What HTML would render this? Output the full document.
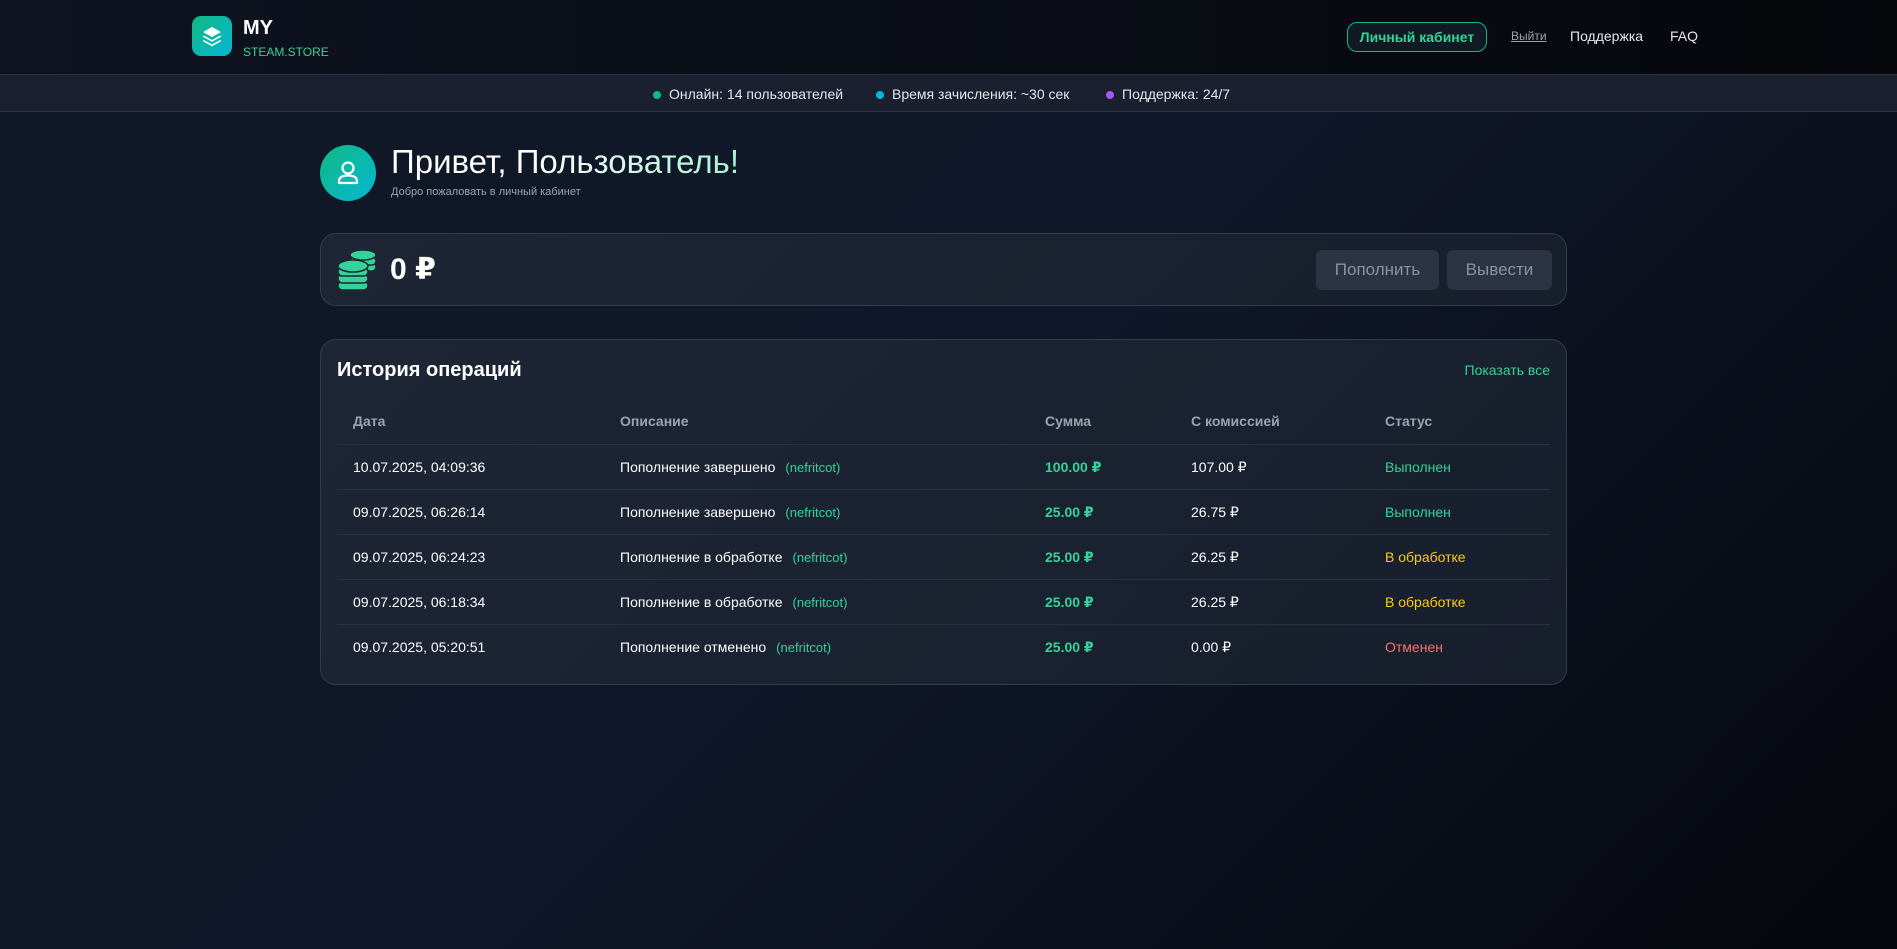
<!DOCTYPE html>
<html><head><meta charset="utf-8"><style>
*{margin:0;padding:0;box-sizing:border-box}
body{width:1897px;height:949px;overflow:hidden;font-family:"Liberation Sans","DejaVu Sans",sans-serif;color:#fff;background:linear-gradient(135deg,#111827 0%,#0f172a 50%,#05070c 100%);position:relative}
.hdr{position:absolute;left:0;top:0;width:1897px;height:75px;background:linear-gradient(90deg,#0e1320,#05070b);border-bottom:1px solid #2a3140}
.logo{position:absolute;left:192px;top:16px;width:40px;height:40px;border-radius:9px;background:linear-gradient(135deg,#10b981,#06b6d4)}
.bar{position:absolute;left:0;top:75px;width:1897px;height:37px;background:#1a2030;border-bottom:1px solid #2e3546;font-size:14px;color:#e5e7eb}
.dot{display:inline-block;width:8px;height:8px;border-radius:50%;margin-right:8px}
.card{position:absolute;left:320px;width:1247px;border:1px solid #343c4c;border-radius:16px;background:linear-gradient(135deg,#1e2636,#171e2c)}
.btn{position:absolute;top:16px;height:40px;background:#2b3344;border-radius:6px;color:#8a93a3;font-size:17px;line-height:40px;text-align:center}
table{position:absolute;left:16px;top:58px;width:1213px;border-collapse:collapse;font-size:14px;table-layout:fixed}
td,th{text-align:left;height:45px;padding:12px 0 0;border-bottom:1px solid #2a3142;vertical-align:top;line-height:20px;white-space:nowrap}
th{color:#9ca3af;font-weight:bold;height:46px;padding-top:13px}
tr:last-child td{border-bottom:none}
td:first-child,th:first-child{padding-left:16px}
.g{color:#34d399}.y{color:#facc15}.r{color:#f87171}
.n{color:#34d399;font-size:13px;margin-left:10px;line-height:20px}
</style></head><body>
<div class="hdr">
<div class="logo"><svg width="40" height="40" viewBox="0 0 40 40"><path d="M20 11l9 5-9 5-9-5z" fill="#fff"/><path d="M12 19.5l8 4.5 8-4.5 1.5 1-9.5 5.3-9.5-5.3z" fill="#fff"/><path d="M12 24l8 4.5 8-4.5 1.5 1-9.5 5.3-9.5-5.3z" fill="#fff"/></svg></div>
<div style="position:absolute;left:243px;top:17px;font-size:20px;font-weight:bold">MY</div>
<div style="position:absolute;left:243px;top:45px;font-size:12px;color:#34d399">STEAM.STORE</div>
<div style="position:absolute;left:1347px;top:22px;width:140px;height:30px;border:1px solid #10b981;border-radius:10px;background:#111a24;color:#34d399;font-weight:bold;font-size:14px;line-height:28px;text-align:center">Личный кабинет</div>
<div style="position:absolute;left:1511px;top:29px;font-size:12px;color:#9ca3af;text-decoration:underline">Выйти</div>
<div style="position:absolute;left:1570px;top:28px;font-size:14px;color:#e5e7eb">Поддержка</div>
<div style="position:absolute;left:1670px;top:28px;font-size:14px;color:#e5e7eb">FAQ</div>
</div>
<div class="bar">
<span style="position:absolute;left:653px;top:11px"><span class="dot" style="background:#10b981"></span>Онлайн: 14 пользователей</span>
<span style="position:absolute;left:876px;top:11px"><span class="dot" style="background:#06b6d4"></span>Время зачисления: ~30 сек</span>
<span style="position:absolute;left:1106px;top:11px"><span class="dot" style="background:#a855f7"></span>Поддержка: 24/7</span>
</div>
<div style="position:absolute;left:320px;top:145px;width:56px;height:56px;border-radius:50%;background:linear-gradient(135deg,#10b981,#06b6d4)">
<svg width="56" height="56" viewBox="0 0 56 56" fill="none" stroke="#fff" stroke-width="2.2"><circle cx="28" cy="23" r="5.5"/><path d="M19 36.5c0-4 3-6 9-6s9 2 9 6v1.5H19z" stroke-linejoin="round"/></svg></div>
<div style="position:absolute;left:391px;top:143px;font-size:33px;background:linear-gradient(90deg,#fff 40%,#a7f3d0);-webkit-background-clip:text;color:transparent">Привет, Пользователь!</div>
<div style="position:absolute;left:391px;top:186px;font-size:11px;color:#9ca3af">Добро пожаловать в личный кабинет</div>
<div class="card" style="top:233px;height:73px">
<svg style="position:absolute;left:16px;top:15px" width="44" height="44" viewBox="0 0 44 44" fill="#34d399" stroke="#1e2636" stroke-width="1.5">
<rect x="13" y="14" width="26" height="8" rx="4"/><rect x="13" y="8" width="26" height="8" rx="4"/><ellipse cx="26" cy="6" rx="13" ry="5"/>
<rect x="1" y="32" width="30" height="9" rx="4.5"/><rect x="1" y="25" width="30" height="9" rx="4.5"/><rect x="1" y="18" width="30" height="9" rx="4.5"/><ellipse cx="16" cy="17" rx="15" ry="6"/></svg>
<div style="position:absolute;left:69px;top:18px;font-size:30px;font-weight:bold">0 ₽</div>
<div class="btn" style="left:995px;width:123px">Пополнить</div>
<div class="btn" style="left:1126px;width:105px">Вывести</div>
</div>
<div class="card" style="top:339px;height:346px">
<div style="position:absolute;left:16px;top:19px;font-size:20px;font-weight:bold">История операций</div>
<div style="position:absolute;right:16px;top:22px;font-size:14px;color:#34d399">Показать все</div>
<table>
<colgroup><col style="width:283px"><col style="width:425px"><col style="width:146px"><col style="width:194px"><col></colgroup>
<tr><th>Дата</th><th>Описание</th><th>Сумма</th><th>С комиссией</th><th>Статус</th></tr>
<tr><td>10.07.2025, 04:09:36</td><td>Пополнение завершено<span class="n">(nefritcot)</span></td><td class="g"><b>100.00 ₽</b></td><td>107.00 ₽</td><td class="g">Выполнен</td></tr>
<tr><td>09.07.2025, 06:26:14</td><td>Пополнение завершено<span class="n">(nefritcot)</span></td><td class="g"><b>25.00 ₽</b></td><td>26.75 ₽</td><td class="g">Выполнен</td></tr>
<tr><td>09.07.2025, 06:24:23</td><td>Пополнение в обработке<span class="n">(nefritcot)</span></td><td class="g"><b>25.00 ₽</b></td><td>26.25 ₽</td><td class="y">В обработке</td></tr>
<tr><td>09.07.2025, 06:18:34</td><td>Пополнение в обработке<span class="n">(nefritcot)</span></td><td class="g"><b>25.00 ₽</b></td><td>26.25 ₽</td><td class="y">В обработке</td></tr>
<tr><td>09.07.2025, 05:20:51</td><td>Пополнение отменено<span class="n">(nefritcot)</span></td><td class="g"><b>25.00 ₽</b></td><td>0.00 ₽</td><td class="r">Отменен</td></tr>
</table>
</div>
</body></html>
